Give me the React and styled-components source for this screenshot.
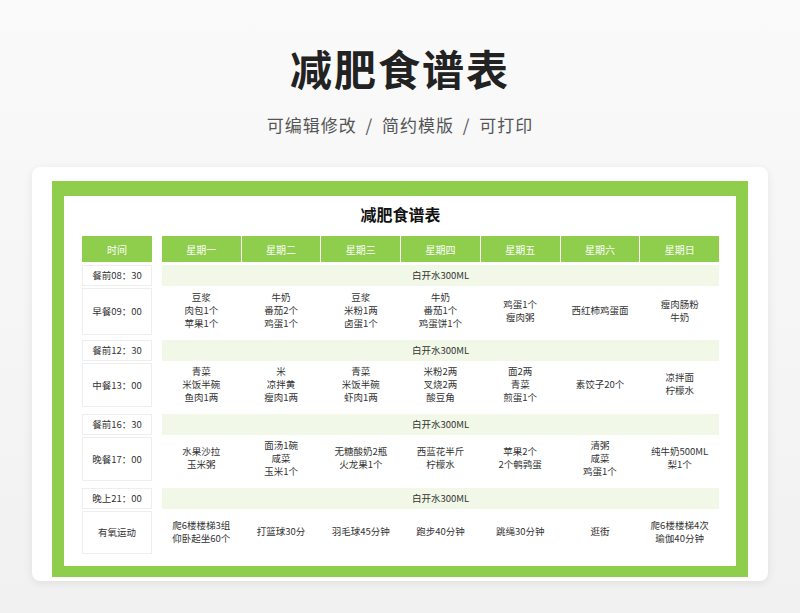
import React from 'react';
import styled, { createGlobalStyle } from 'styled-components';

const Global = createGlobalStyle`
  body { margin: 0; background: #f4f4f5; font-family: "Noto Sans CJK SC", "Noto Sans", sans-serif; }
`;

const Page = styled.div`
  width: 800px;
  height: 613px;
  padding-top: 38px;
  box-sizing: border-box;
  background: linear-gradient(#fafafa, #f1f1f2);
`;

const Heading = styled.h1`
  margin: 0;
  text-align: center;
  font-size: 42px;
  font-weight: 700;
  color: #222;
  line-height: 60px;
  letter-spacing: 2px;
`;

const Sub = styled.div`
  margin-top: 14px;
  text-align: center;
  font-size: 17px;
  color: #555;
  letter-spacing: 1px;
  word-spacing: 4px;
`;

const Card = styled.div`
  margin: 30px 32px 0;
  height: 414px;
  background: #fff;
  border-radius: 8px;
  box-shadow: 0 2px 10px rgba(0,0,0,0.08);
  padding: 14px 20px 4px;
  box-sizing: border-box;
`;

const Frame = styled.div`
  background: #8fce4c;
  padding: 15px 12px 11px;
  height: 396px;
  box-sizing: border-box;
`;

const Sheet = styled.div`
  background: #fff;
  height: 100%;
  padding: 6px 17px 0 18px;
  box-sizing: border-box;
`;

const SheetTitle = styled.div`
  text-align: center;
  font-size: 16px;
  font-weight: 700;
  color: #111;
  line-height: 24px;
  margin-bottom: 10px;
`;

const Grid = styled.div`
  display: grid;
  grid-template-columns: 70px 8px repeat(7, 1fr);
  column-gap: 1px;
  font-size: 9.5px;
  color: #333;
  line-height: 13px;
`;

const Head = styled.div`
  background: #8fce4c;
  color: #fff;
  height: 26px;
  display: flex;
  align-items: center;
  justify-content: center;
  font-size: 10px;
  grid-column: ${p => p.col};
  margin-bottom: 3px;
`;

const TimeCell = styled.div`
  grid-column: 1;
  border: 1px solid #eee;
  display: flex;
  align-items: center;
  justify-content: center;
  height: ${p => p.h}px;
  box-sizing: border-box;
  margin-top: ${p => p.mt || 0}px;
`;

const Water = styled.div`
  grid-column: 3 / 10;
  background: #f1f8e7;
  display: flex;
  align-items: center;
  justify-content: center;
  margin-top: ${p => p.mt || 0}px;
`;

const Cell = styled.div`
  grid-column: ${p => p.col};
  display: flex;
  flex-direction: column;
  align-items: center;
  justify-content: center;
  text-align: center;
`;

const days = ['星期一', '星期二', '星期三', '星期四', '星期五', '星期六', '星期日'];

const blocks = [
  { pre: '餐前08：30', meal: '早餐09：00', h: 47, mt: 0, items: [
    ['豆浆', '肉包1个', '苹果1个'], ['牛奶', '番茄2个', '鸡蛋1个'], ['豆浆', '米粉1两', '卤蛋1个'],
    ['牛奶', '番茄1个', '鸡蛋饼1个'], ['鸡蛋1个', '瘦肉粥'], ['西红柿鸡蛋面'], ['瘦肉肠粉', '牛奶']] },
  { pre: '餐前12：30', meal: '中餐13：00', h: 44, mt: 5, items: [
    ['青菜', '米饭半碗', '鱼肉1两'], ['米', '凉拌黄', '瘦肉1两'], ['青菜', '米饭半碗', '虾肉1两'],
    ['米粉2两', '叉烧2两', '酸豆角'], ['面2两', '青菜', '煎蛋1个'], ['素饺子20个'], ['凉拌面', '柠檬水']] },
  { pre: '餐前16：30', meal: '晚餐17：00', h: 44, mt: 7, items: [
    ['水果沙拉', '玉米粥'], ['面汤1碗', '咸菜', '玉米1个'], ['无糖酸奶2瓶', '火龙果1个'],
    ['西蓝花半斤', '柠檬水'], ['苹果2个', '2个鹌鹑蛋'], ['清粥', '咸菜', '鸡蛋1个'], ['纯牛奶500ML', '梨1个']] },
  { pre: '晚上21：00', meal: '有氧运动', h: 43, mt: 7, items: [
    ['爬6楼楼梯3组', '仰卧起坐60个'], ['打篮球30分'], ['羽毛球45分钟'], ['跑步40分钟'],
    ['跳绳30分钟'], ['逛街'], ['爬6楼楼梯4次', '瑜伽40分钟']] },
];

export default function App() {
  return (
    <Page>
      <Global />
      <Heading>减肥食谱表</Heading>
      <Sub>可编辑修改 / 简约模版 / 可打印</Sub>
      <Card>
        <Frame>
          <Sheet>
            <SheetTitle>减肥食谱表</SheetTitle>
            <Grid>
              <Head col={1}>时间</Head>
              {days.map((d, i) => <Head key={d} col={i + 3}>{d}</Head>)}
              {blocks.map(b => (
                <React.Fragment key={b.pre}>
                  <TimeCell h={21} mt={b.mt}>{b.pre}</TimeCell>
                  <Water mt={b.mt}>白开水300ML</Water>
                  <TimeCell h={b.h} mt={2}>{b.meal}</TimeCell>
                  {b.items.map((lines, i) => (
                    <Cell key={i} col={i + 3}>
                      {lines.map(l => <span key={l}>{l}</span>)}
                    </Cell>
                  ))}
                </React.Fragment>
              ))}
            </Grid>
          </Sheet>
        </Frame>
      </Card>
    </Page>
  );
}
